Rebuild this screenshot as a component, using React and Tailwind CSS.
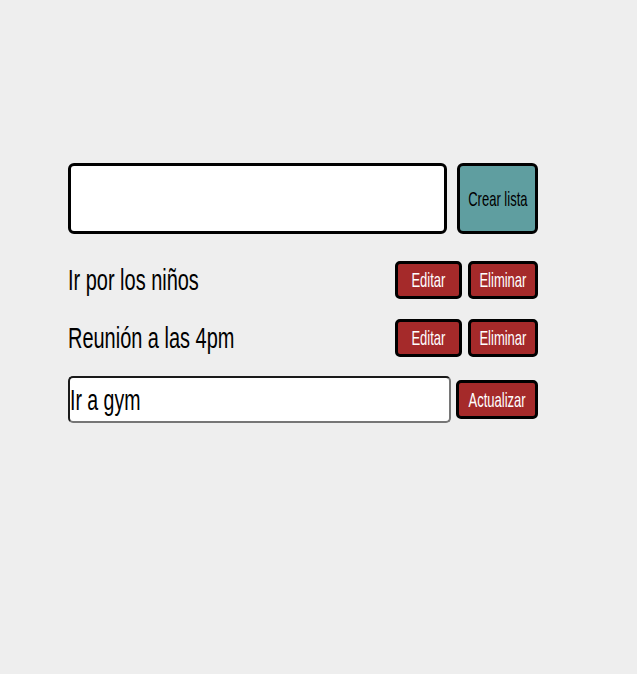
import React from "react";

const font = { fontFamily: '"Liberation Sans", Arial, sans-serif' };

function RowItem({ text, mt }) {
  return (
    <div className={`${mt} flex h-[38px] items-center justify-between`}>
      <span className="inline-block origin-left scale-x-[0.665] whitespace-nowrap text-[30px] leading-none text-black">
        {text}
      </span>
      <div className="flex h-full gap-[6px]">
        <button className="flex h-full w-[67px] items-center justify-center overflow-visible rounded-[5px] border-[3px] border-black bg-[#a52a2a] text-[21px] text-white">
          <span className="inline-block scale-x-[0.62] whitespace-nowrap">Editar</span>
        </button>
        <button className="flex h-full w-[70px] items-center justify-center overflow-visible rounded-[5px] border-[3px] border-black bg-[#a52a2a] text-[21px] text-white">
          <span className="inline-block scale-x-[0.62] whitespace-nowrap">Eliminar</span>
        </button>
      </div>
    </div>
  );
}

export default function App() {
  return (
    <div className="min-h-screen bg-[#eeeeee] pt-[163px]" style={font}>
      <div className="ml-[68px] flex w-[470px] flex-col">
        <div className="flex h-[71px] gap-[10px]">
          <input
            type="text"
            className="h-full flex-1 rounded-[6px] border-[3px] border-black bg-white outline-none"
          />
          <button className="flex h-full w-[81px] items-center justify-center rounded-[6px] border-[3px] border-black bg-[#5f9ea0] text-[21px] text-black">
            <span className="inline-block scale-x-[0.62] whitespace-nowrap">Crear lista</span>
          </button>
        </div>

        <RowItem text="Ir por los niños" mt="mt-[27px]" />
        <RowItem text="Reunión a las 4pm" mt="mt-[20px]" />

        <div className="mt-[19px] flex h-[47px] items-center gap-[5px]">
          <div className="h-full w-[383px] overflow-hidden rounded-[5px] border-2 border-t-[#1a1a1a] border-l-[#1a1a1a] border-r-[#767676] border-b-[#767676] bg-white">
            <input
              type="text"
              defaultValue="Ir a gym"
              className="h-full w-[590px] origin-left scale-x-[0.65] bg-transparent px-0 text-[30px] text-black outline-none"
              style={font}
            />
          </div>
          <button className="flex h-[39px] w-[82px] items-center justify-center rounded-[5px] border-[3px] border-black bg-[#a52a2a] text-[21px] text-white">
            <span className="inline-block scale-x-[0.62] whitespace-nowrap">Actualizar</span>
          </button>
        </div>
      </div>
    </div>
  );
}
